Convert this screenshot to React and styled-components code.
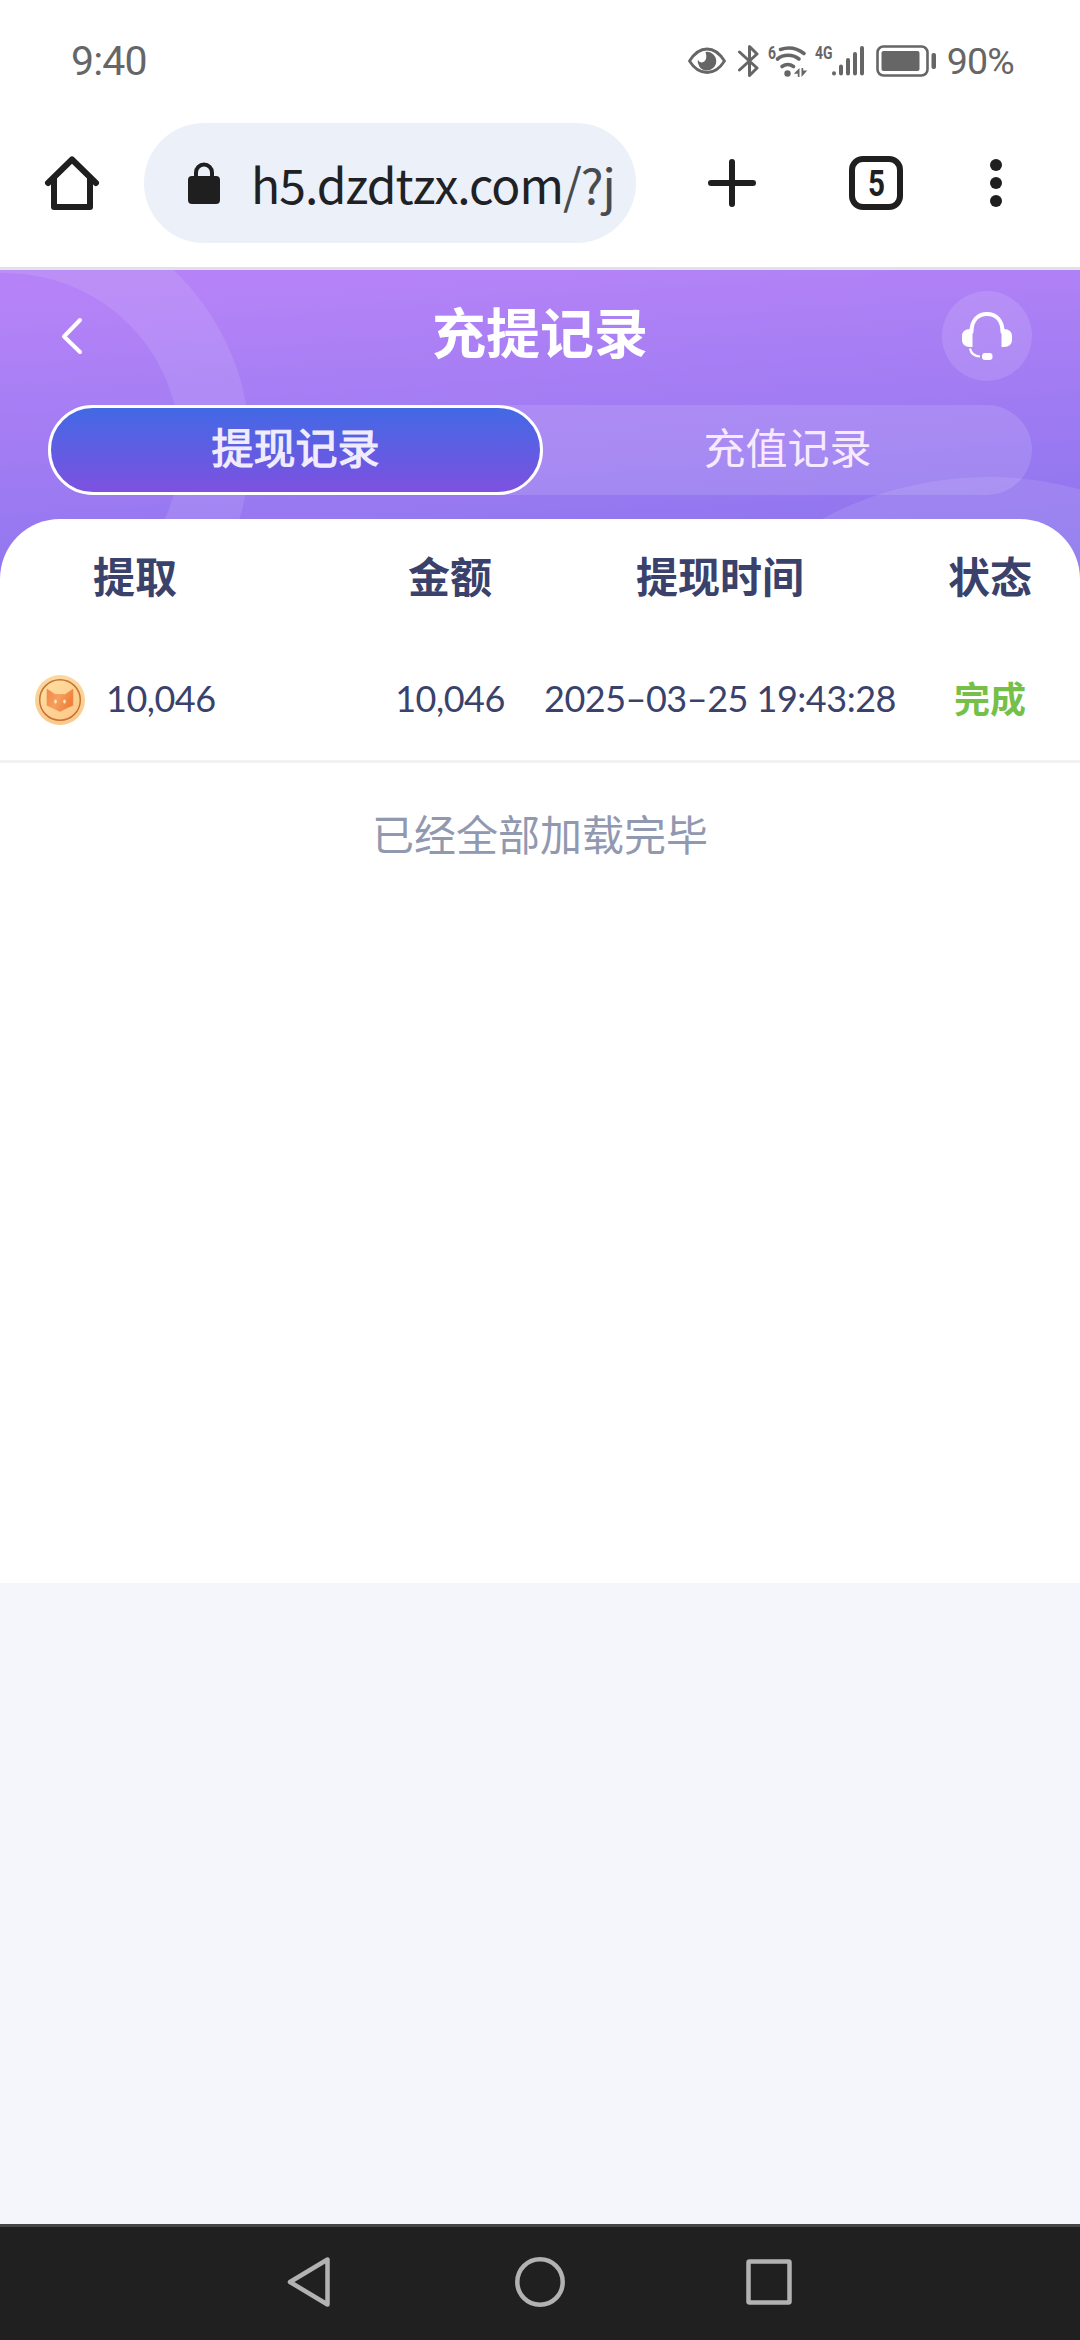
import React from "react";
import styled, { createGlobalStyle } from "styled-components";

const Theme = {
    ink: "#1f1f1f",
    status: "#666666",
    text: "#3a426c",
    muted: "#9199b0",
    success: "#76c04a",
    cjk: `"Noto Sans CJK SC", sans-serif`,
    digits: `Lato, "Noto Sans CJK SC", sans-serif`,
};

const GlobalStyle = createGlobalStyle`
    body {
        margin: 0;
        background: #f5f5fc;
        font-family: ${Theme.cjk};
    }
`;

const Screen = styled.div`
    width: 1080px;
    height: 2340px;
    display: flex;
    flex-direction: column;
    overflow: hidden;
`;

/* Status bar */

const StatusBar = styled.div`
    height: 99px;
    box-sizing: border-box;
    padding: 22px 66px 0 71px;
    display: flex;
    align-items: center;
    justify-content: space-between;
    background: #fff;
    color: ${Theme.status};
`;

const StatusText = styled.span`
    font-family: Roboto, sans-serif;
    font-size: ${props => props.$size}px;
    line-height: 44px;
    letter-spacing: ${props => props.$spacing || 0}px;
    white-space: nowrap;
`;

const StatusIcons = styled.div`
    display: flex;
    align-items: center;
    gap: 7px;
`;

/* Browser toolbar */

const Toolbar = styled.div`
    height: 171px;
    box-sizing: border-box;
    border-bottom: 3px solid #e2e0e8;
    padding: 0 78px 0 42px;
    display: flex;
    align-items: center;
    background: #fff;
`;

const AddressBar = styled.div`
    width: 492px;
    height: 120px;
    box-sizing: border-box;
    margin: 0 69px 0 42px;
    padding: 0 23px 0 44px;
    border-radius: 60px;
    display: flex;
    align-items: center;
    gap: 31px;
    background: #ebf0f9;
`;

const Url = styled.div`
    flex: 1;
    overflow: hidden;
    white-space: nowrap;
    font-size: 48px;
    line-height: 72px;
    letter-spacing: -0.95px;
    color: #202124;

    span {
        color: #474b4e;
    }
`;

const ToolbarActions = styled.div`
    flex: 1;
    display: flex;
    align-items: center;
    justify-content: space-between;
`;

/* Page header */

const Hero = styled.header`
    position: relative;
    height: 309px;
    flex: none;
    background: linear-gradient(176deg, #b583f7 8%, #8b74ee 94%);
`;

const HeroArt = styled.svg`
    position: absolute;
    top: 0;
    left: 0;
`;

const HeroBody = styled.div`
    position: relative;
    padding: 21px 48px 0;
`;

const TitleRow = styled.div`
    height: 90px;
    display: grid;
    grid-template-columns: 90px 1fr 90px;
    align-items: center;
`;

const Title = styled.h1`
    margin: 0;
    font-size: 54px;
    line-height: 80px;
    font-weight: 700;
    text-align: center;
    color: #fff;
    padding-bottom: 10px;
`;

const RoundButton = styled.button`
    width: 90px;
    height: 90px;
    padding: 0;
    border: 0;
    border-radius: 50%;
    display: flex;
    align-items: center;
    justify-content: center;
    background: rgba(255, 255, 255, 0.12);
`;

const BackButton = styled(RoundButton)`
    justify-content: flex-start;
    padding-left: 12px;
    background: none;
`;

const Tabs = styled.div`
    margin-top: 24px;
    height: 90px;
    border-radius: 45px;
    display: flex;
    background: rgba(255, 255, 255, 0.12);
`;

const Tab = styled.button`
    width: ${props => (props.$active ? "495px" : "489px")};
    box-sizing: border-box;
    padding: 0 0 8px;
    border: ${props => (props.$active ? "3px solid #fff" : "0")};
    border-radius: 45px;
    font-family: inherit;
    font-size: 42px;
    line-height: 60px;
    -webkit-text-stroke: ${props => (props.$active ? "1.2px" : "0")} currentColor;
    color: ${props => (props.$active ? "#f0ecfd" : "#f8eafe")};
    background: ${props => (props.$active ? "linear-gradient(180deg, #406ae5, #8050e0)" : "none")};
    background-origin: border-box;
`;

/* Records */

const Panel = styled.main`
    position: relative;
    flex: none;
    height: 1064px;
    margin-top: -60px;
    border-radius: 60px 60px 0 0;
    background: #fff;
    color: ${Theme.text};
`;

const Row = styled.div`
    display: grid;
    grid-template-columns: 360px 180px 360px 180px;
    align-items: center;
    text-align: center;
`;

const HeadRow = styled(Row)`
    height: 111px;
    padding-bottom: 6px;
    font-size: 42px;
    line-height: 60px;
    font-weight: 700;

    > :first-child {
        padding-right: 90px;
    }
`;

const RecordRow = styled(Row)`
    height: 124px;
    border-bottom: 3px solid #f2f2f2;
    font-family: ${Theme.digits};
    font-size: 36px;
    white-space: nowrap;
`;

const Amount = styled.span`
    letter-spacing: -0.5px;
`;

const CoinCell = styled.div`
    display: flex;
    align-items: center;
    gap: 20px;
    padding: 4px 0 0 34px;

    ${Amount} {
        padding-bottom: 4px;
    }
`;

const Status = styled.span`
    padding-bottom: 3px;
    font-family: ${Theme.cjk};
    font-weight: 700;
    color: ${Theme.success};
`;

const EndOfList = styled.div`
    margin-top: 39px;
    font-size: 42px;
    line-height: 62px;
    text-align: center;
    color: ${Theme.muted};
`;

/* System navigation */

const NavBar = styled.nav`
    margin-top: auto;
    height: 116px;
    box-sizing: border-box;
    border-top: 3px solid #454545;
    padding: 0 284px 3px;
    display: flex;
    align-items: center;
    justify-content: space-between;
    background: #202020;
`;

const stroke = { fill: "none", strokeLinecap: "round", strokeLinejoin: "round" };

const EyeIcon = () => (
    <svg width="43" height="28" viewBox="0 0 43 28" {...stroke}>
        <path d="M1.500 14C6.500 6 12.500 2 19 2s12.500 4 17.500 12C31.500 22 25.500 25.500 19 25.500S6.500 22 1.500 14Z" stroke="currentColor" strokeWidth="2.800" />
        <path d="M17.500 5a9.300 9.300 0 1 1-7.700 7.500c1 2.200 3 3.300 5 2.800 3.200-.8 4.500-5 2.700-10.300Z" fill="currentColor" />
    </svg>
);

const BluetoothIcon = () => (
    <svg width="23" height="34" viewBox="0 0 23 34" {...stroke}>
        <path d="M1.500 8 19 24 11.500 31.500V2.500L19 10 1.500 26" stroke="currentColor" strokeWidth="3" />
    </svg>
);

const SmallText = styled.text`
    font-family: Roboto, sans-serif;
    font-weight: 700;
    fill: currentColor;
`;

const WifiIcon = () => (
    <svg width="40" height="34" viewBox="0 0 40 34" overflow="visible" {...stroke}>
        <SmallText x="0" y="15" fontSize="19" textLength="8" lengthAdjust="spacingAndGlyphs">6</SmallText>
        <g stroke="currentColor" strokeWidth="3.600">
            <path d="M12.500 5.500c8-2.800 16.500-1.400 23.500 4" />
            <path d="M9.500 15c6-5 15-5 21.500 0" />
            <path d="M14 22.500c3.500-2.400 8-2.400 11.500 0" />
        </g>
        <circle cx="19.500" cy="29.500" r="3.200" fill="currentColor" />
        <path d="M31.500 24v9h-1.700v-3.200h-4L31.500 24ZM33.500 33v-9h1.700v2.500h4L33.500 33Z" fill="currentColor" />
    </svg>
);

const SignalIcon = () => (
    <svg width="54" height="34" viewBox="0 0 54 34" overflow="visible" {...stroke}>
        <SmallText x="0" y="15" fontSize="19" textLength="17.500" lengthAdjust="spacingAndGlyphs">4G</SmallText>
        <path d="M19 29.300v0.200M26 29.500v-7M33 29.500V16M40 29.500V10M47 29.500V4" stroke="currentColor" strokeWidth="4" />
    </svg>
);

const BatteryIcon = () => (
    <svg width="64" height="32" viewBox="0 0 64 32">
        <rect x="1.500" y="1.500" width="50" height="29" rx="6" fill="none" stroke="currentColor" strokeWidth="2.600" />
        <rect x="5.500" y="6" width="38" height="20" rx="2" fill="currentColor" />
        <rect x="55.500" y="8" width="4.500" height="16" rx="2" fill="currentColor" />
    </svg>
);

const HomeIcon = () => (
    <svg width="60" height="60" viewBox="0 0 60 60" stroke={Theme.ink} strokeWidth="6" {...stroke}>
        <path d="M6 30 30 6.500 54 30" />
        <path d="M12 26v28h36V26" />
    </svg>
);

const LockIcon = () => (
    <svg width="32" height="44" viewBox="0 0 32 44">
        <path d="M8 18V11.500a8 8 0 0 1 16 0V18" fill="none" stroke={Theme.ink} strokeWidth="4" />
        <rect y="15" width="32" height="28" rx="4" fill={Theme.ink} />
    </svg>
);

const PlusIcon = () => (
    <svg width="57" height="54" viewBox="0 0 57 54" stroke={Theme.ink} strokeWidth="6" {...stroke}>
        <path d="M27 6v42M6 27h42" />
    </svg>
);

const TabCountIcon = ({ count }) => (
    <svg width="54" height="54" viewBox="0 0 54 54" color={Theme.ink}>
        <rect x="3" y="3" width="48" height="48" rx="11" fill="none" stroke="currentColor" strokeWidth="6" />
        <SmallText x="19" y="40" fontSize="36" textLength="17" lengthAdjust="spacingAndGlyphs">{count}</SmallText>
    </svg>
);

const MoreIcon = () => (
    <svg width="12" height="48" viewBox="0 0 12 48" fill={Theme.ink}>
        <circle cx="6" cy="6" r="6" />
        <circle cx="6" cy="24" r="6" />
        <circle cx="6" cy="42" r="6" />
    </svg>
);

const BackIcon = () => (
    <svg width="24" height="40" viewBox="0 0 24 40" stroke="#fff" strokeWidth="4" {...stroke}>
        <path d="M20 4 4 20.500 20 36" />
    </svg>
);

const HeadsetIcon = () => (
    <svg width="52" height="52" viewBox="0 0 52 52" {...stroke}>
        <path d="M10.500 22C10.500 10 17 4 26 4S41.500 10 41.500 22" stroke="#fff" strokeWidth="4" />
        <path d="M11.500 19v18H9c-5 0-8-3-8-7v-4c0-4 3-7 8-7ZM40.500 19v18H43c5 0 8-3 8-7v-4c0-4-3-7-8-7Z" fill="#fff" />
        <path d="M9 38.500c1 5 4.500 7.800 10 8" stroke="#fff" strokeWidth="2.200" strokeLinecap="butt" />
        <rect x="21" y="43" width="10.500" height="7" rx="3" fill="#fff" />
    </svg>
);

const CoinIcon = () => (
    <svg width="52" height="52" viewBox="0 0 52 52">
        <defs>
            <linearGradient id="coinRim" x1="0" y1="0" x2="0" y2="1">
                <stop offset="0" stopColor="#fbd9a0" />
                <stop offset="1" stopColor="#fac98a" />
            </linearGradient>
            <linearGradient id="coinFace" x1="0" y1="0" x2="1" y2="1">
                <stop offset="0" stopColor="#ffe0a2" />
                <stop offset="1" stopColor="#fdc787" />
            </linearGradient>
            <linearGradient id="coinFox" x1="0" y1="0" x2="1" y2="0.400">
                <stop offset="0" stopColor="#f4864c" />
                <stop offset="0.500" stopColor="#f5a05c" />
                <stop offset="1" stopColor="#ef7f3c" />
            </linearGradient>
        </defs>
        <circle cx="26" cy="26" r="25" fill="url(#coinRim)" />
        <circle cx="26" cy="26" r="20.300" fill="url(#coinFace)" stroke="#c97238" strokeWidth="1.500" />
        <path d="M13 15 21 20.500h10L39 15v16.500l-5 2-8 4-8-4-5-2Z" fill="url(#coinFox)" stroke="#f09050" strokeWidth="0.600" strokeLinejoin="round" />
        <ellipse cx="21.500" cy="27.500" rx="1.300" ry="2" fill="#ffe6b8" />
        <ellipse cx="30.500" cy="27.500" rx="1.300" ry="2" fill="#ffe6b8" />
    </svg>
);

const records = [
    { coins: "10,046", amount: "10,046", date: "2025–03–25 19:43:28", status: "完成" },
];

export default function App() {
    return (
        <Screen>
            <GlobalStyle />
            <StatusBar>
                <StatusText $size={41} $spacing={-0.8}>9:40</StatusText>
                <StatusIcons>
                    <EyeIcon />
                    <BluetoothIcon />
                    <WifiIcon />
                    <SignalIcon />
                    <BatteryIcon />
                    <StatusText $size={37.5} $spacing={-0.8}>90%</StatusText>
                </StatusIcons>
            </StatusBar>

            <Toolbar>
                <HomeIcon />
                <AddressBar>
                    <LockIcon />
                    <Url>h5.dzdtzx.com<span>/?j</span></Url>
                </AddressBar>
                <ToolbarActions>
                    <PlusIcon />
                    <TabCountIcon count={5} />
                    <MoreIcon />
                </ToolbarActions>
            </Toolbar>

            <Hero>
                <HeroArt width="1080" height="309" viewBox="0 0 1080 309">
                    <circle cx="5" cy="178" r="210" fill="none" stroke="#fff" strokeOpacity="0.100" strokeWidth="70" />
                    <circle cx="988" cy="556" r="349" fill="#fff" fillOpacity="0.100" />
                </HeroArt>
                <HeroBody>
                    <TitleRow>
                        <BackButton><BackIcon /></BackButton>
                        <Title>充提记录</Title>
                        <RoundButton><HeadsetIcon /></RoundButton>
                    </TitleRow>
                    <Tabs>
                        <Tab $active>提现记录</Tab>
                        <Tab>充值记录</Tab>
                    </Tabs>
                </HeroBody>
            </Hero>

            <Panel>
                <HeadRow>
                    <span>提取</span>
                    <span>金额</span>
                    <span>提现时间</span>
                    <span>状态</span>
                </HeadRow>
                {records.map(record => (
                    <RecordRow key={record.date}>
                        <CoinCell>
                            <CoinIcon />
                            <Amount>{record.coins}</Amount>
                        </CoinCell>
                        <Amount>{record.amount}</Amount>
                        <Amount>{record.date}</Amount>
                        <Status>{record.status}</Status>
                    </RecordRow>
                ))}
                <EndOfList>已经全部加载完毕</EndOfList>
            </Panel>

            <NavBar>
                <svg width="54" height="54" viewBox="0 0 54 54" stroke="#b2b2b2" strokeWidth="4.500" {...stroke}>
                    <path d="M43.500 4.500v45L6 27Z" />
                </svg>
                <svg width="54" height="54" viewBox="0 0 54 54" stroke="#b2b2b2" strokeWidth="4.500" {...stroke}>
                    <circle cx="27" cy="27" r="22.700" />
                </svg>
                <svg width="54" height="54" viewBox="0 0 54 54" stroke="#b2b2b2" strokeWidth="4.500" {...stroke}>
                    <rect x="6.500" y="6.500" width="41" height="41" rx="1" />
                </svg>
            </NavBar>
        </Screen>
    );
}
